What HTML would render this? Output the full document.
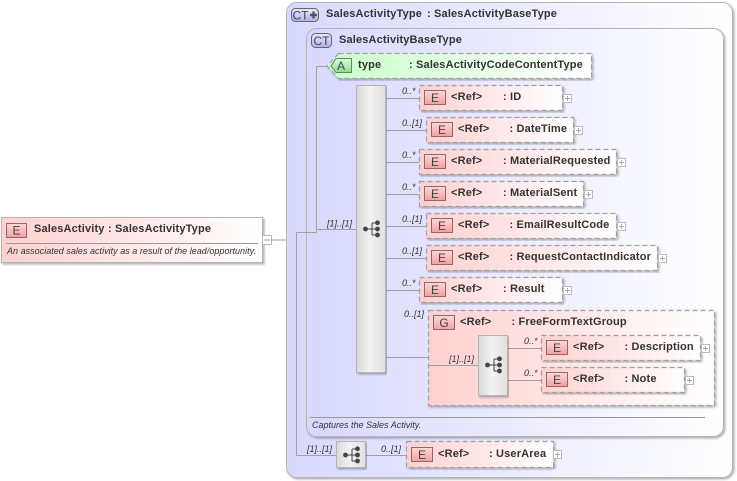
<!DOCTYPE html>
<html><head><meta charset="utf-8"><style>
html,body{margin:0;padding:0;background:#fff;width:737px;height:481px;overflow:hidden}
svg{display:block}
text{font-family:"Liberation Sans",sans-serif}
.n{font-size:11px;font-weight:bold;fill:#333;letter-spacing:.16px}
.c{font-size:9px;font-style:italic;fill:#333}
.d{font-size:9px;font-style:italic;fill:#333}
.i{font-size:12px;fill:#444;text-anchor:middle}
.l{stroke:#a0a0a0;fill:none}
.e{fill:url(#pk);stroke:#a0a0a0;stroke-width:1.2;stroke-dasharray:5 3;filter:url(#s)}
.ic{fill:url(#ic);stroke:#8a6a6a}
.x{fill:#fff;stroke:#bbb}
.m{stroke:#aaa;fill:none}
.sq{fill:url(#sq);stroke:#b4b4b4;filter:url(#s)}
</style></head><body>
<svg width="737" height="481" viewBox="0 0 737 481" xmlns="http://www.w3.org/2000/svg">
<defs>
<linearGradient id="pk"><stop offset="0" stop-color="#ffd0d0"/><stop offset="1" stop-color="#fff"/></linearGradient>
<linearGradient id="bl"><stop offset="0" stop-color="#d8d8ff"/><stop offset="1" stop-color="#fff"/></linearGradient>
<linearGradient id="gr"><stop offset="0" stop-color="#c8ffc8"/><stop offset="1" stop-color="#fff"/></linearGradient>
<linearGradient id="sq"><stop offset="0" stop-color="#d8d8d8"/><stop offset=".45" stop-color="#f2f2f2"/><stop offset="1" stop-color="#e0e0e0"/></linearGradient>
<linearGradient id="ic" x2="0" y2="1"><stop offset="0" stop-color="#ffd8d8"/><stop offset="1" stop-color="#f4a0a0"/></linearGradient>
<linearGradient id="ia" x2="0" y2="1"><stop offset="0" stop-color="#d8ffd8"/><stop offset="1" stop-color="#90dc90"/></linearGradient>
<linearGradient id="ib" x2="0" y2="1"><stop offset="0" stop-color="#e8e8ff"/><stop offset="1" stop-color="#b0b0f0"/></linearGradient>
<filter id="s" x="-5%" y="-5%" width="110%" height="115%"><feDropShadow dx="1.5" dy="1.5" stdDeviation="1" flood-color="#000" flood-opacity=".3"/></filter>
</defs>

<!-- root element -->
<rect x="1.5" y="217.5" width="261" height="45" fill="url(#pk)" stroke="#b4b4b4" filter="url(#s)"/>
<rect class="ic" x="6.5" y="223.5" width="20" height="14"/><text class="i" x="16.5" y="234.500">E</text>
<text class="n" x="34" y="232">SalesActivity</text><text class="n" x="108" y="232">: SalesActivityType</text>
<path d="M6 243.5H258" stroke="#999"/>
<text class="d" x="7" y="254" textLength="249">An associated sales activity as a result of the lead/opportunity.</text>
<rect class="x" x="262.5" y="235.5" width="9" height="9"/><path class="m" d="M264 240H270"/>
<path class="l" d="M271 240H297"/>

<!-- outer CT -->
<rect x="286.5" y="2.5" width="446" height="475" rx="10" fill="url(#bl)" stroke="#b4b4b4" filter="url(#s)"/>
<rect x="291.5" y="8.5" width="27" height="13" rx="4" fill="url(#ib)" stroke="#666"/>
<text class="i" x="300.500" y="19.500">CT</text><path d="M310 15H317M313.500 11.500V18.500" stroke="#555" stroke-width="2.400"/>
<text class="n" x="326" y="17">SalesActivityType</text><text class="n" x="427" y="17">: SalesActivityBaseType</text>

<!-- inner CT -->
<rect x="306.5" y="28.5" width="417" height="408" rx="10" fill="url(#bl)" stroke="#b4b4b4" filter="url(#s)"/>
<rect x="311.5" y="33.5" width="20" height="14" rx="4" fill="url(#ib)" stroke="#666"/>
<text class="i" x="321.5" y="45">CT</text>
<text class="n" x="339" y="43">SalesActivityBaseType</text>
<path d="M310 417.5H705" stroke="#999"/>
<text class="d" x="312" y="428">Captures the Sales Activity.</text>

<!-- connectors -->
<path class="l" d="M296.500 232V455.500H336M296 232.500H316.500M316.500 232.500V66.500H330M316.500 229.500H356"/>
<path class="l" d="M366 455.500H406"/>
<path class="l" d="M385 98.500H419M385 130.500H426M385 162.500H419M385 194.500H419M385 226.500H426M385 258.500H426M385 290.500H419M385 357.500H428"/>
<text class="c" x="327" y="226.500">[1]..[1]</text>
<text class="c" x="307" y="452">[1]..[1]</text>
<text class="c" x="381" y="452">0..[1]</text>

<!-- attribute -->
<path d="M338.500 53.500H591.500V78.500H338.500L327 66Z" fill="url(#gr)" stroke="#a0a0a0" stroke-width="1.200" stroke-dasharray="5 3" filter="url(#s)"/>
<path d="M336 58.500H351.500V72.500H336L331 66Z" fill="url(#ia)" stroke="#5a8a5a"/>
<text class="i" x="341" y="70">A</text>
<text class="n" x="358" y="68">type</text><text class="n" x="409" y="68">: SalesActivityCodeContentType</text>

<!-- main sequence -->
<rect class="sq" x="356.500" y="85.500" width="29" height="287"/>
<g stroke="#444" fill="#444"><path fill="none" d="M366 229H372M372 223V235M372 223H378M372 229H378M372 235H378"/><circle cx="365.500" cy="229" r="2.400" stroke="none"/><circle cx="377.500" cy="222.800" r="2.400" stroke="none"/><circle cx="377.500" cy="229" r="2.400" stroke="none"/><circle cx="377.500" cy="235" r="2.400" stroke="none"/></g>

<!-- ID -->
<text class="c" x="402" y="94">0..*</text>
<rect class="e" x="419.500" y="85.500" width="143" height="25"/>
<rect class="ic" x="424.500" y="90.500" width="21" height="14"/><text class="i" x="435" y="102">E</text>
<text class="n" x="451" y="100">&lt;Ref&gt;</text><text class="n" x="503" y="100">: ID</text>
<rect class="x" x="563.500" y="94.500" width="8" height="8"/><path class="m" d="M565 98.500H570M567.500 96V101"/>

<!-- DateTime -->
<text class="c" x="402" y="126">0..[1]</text>
<rect class="e" x="426.500" y="117.500" width="147" height="25"/>
<rect class="ic" x="431.500" y="122.500" width="21" height="14"/><text class="i" x="442" y="134">E</text>
<text class="n" x="458" y="132">&lt;Ref&gt;</text><text class="n" x="509.500" y="132">: DateTime</text>
<rect class="x" x="574.500" y="126.500" width="8" height="8"/><path class="m" d="M576 130.500H581M578.500 128V133"/>

<!-- MaterialRequested -->
<text class="c" x="402" y="158">0..*</text>
<rect class="e" x="419.500" y="149.500" width="197" height="25"/>
<rect class="ic" x="424.500" y="154.500" width="21" height="14"/><text class="i" x="435" y="166">E</text>
<text class="n" x="451" y="164">&lt;Ref&gt;</text><text class="n" x="503" y="164">: MaterialRequested</text>
<rect class="x" x="617.500" y="158.500" width="8" height="8"/><path class="m" d="M619 162.500H624M621.500 160V165"/>

<!-- MaterialSent -->
<text class="c" x="402" y="190">0..*</text>
<rect class="e" x="419.500" y="181.500" width="164" height="25"/>
<rect class="ic" x="424.500" y="186.500" width="21" height="14"/><text class="i" x="435" y="198">E</text>
<text class="n" x="451" y="196">&lt;Ref&gt;</text><text class="n" x="503" y="196">: MaterialSent</text>
<rect class="x" x="584.500" y="190.500" width="8" height="8"/><path class="m" d="M586 194.500H591M588.500 192V197"/>

<!-- EmailResultCode -->
<text class="c" x="402" y="222">0..[1]</text>
<rect class="e" x="426.500" y="213.500" width="190" height="25"/>
<rect class="ic" x="431.500" y="218.500" width="21" height="14"/><text class="i" x="442" y="230">E</text>
<text class="n" x="458" y="228">&lt;Ref&gt;</text><text class="n" x="509.500" y="228">: EmailResultCode</text>
<rect class="x" x="617.500" y="222.500" width="8" height="8"/><path class="m" d="M619 226.500H624M621.500 224V229"/>

<!-- RequestContactIndicator -->
<text class="c" x="402" y="254">0..[1]</text>
<rect class="e" x="426.500" y="245.500" width="231" height="25"/>
<rect class="ic" x="431.500" y="250.500" width="21" height="14"/><text class="i" x="442" y="262">E</text>
<text class="n" x="458" y="260">&lt;Ref&gt;</text><text class="n" x="509.500" y="260">: RequestContactIndicator</text>
<rect class="x" x="658.500" y="254.500" width="8" height="8"/><path class="m" d="M660 258.500H665M662.500 256V261"/>

<!-- Result -->
<text class="c" x="402" y="286">0..*</text>
<rect class="e" x="419.500" y="277.500" width="143" height="25"/>
<rect class="ic" x="424.500" y="282.500" width="21" height="14"/><text class="i" x="435" y="294">E</text>
<text class="n" x="451" y="292">&lt;Ref&gt;</text><text class="n" x="503" y="292">: Result</text>
<rect class="x" x="563.500" y="286.500" width="8" height="8"/><path class="m" d="M565 290.500H570M567.500 288V293"/>

<!-- Group -->
<text class="c" x="404" y="317">0..[1]</text>
<rect class="e" x="428.500" y="310.500" width="286" height="95"/>
<rect class="ic" x="433.500" y="315.500" width="21" height="14"/><text class="i" x="444" y="327">G</text>
<text class="n" x="460" y="325">&lt;Ref&gt;</text><text class="n" x="511.500" y="325">: FreeFormTextGroup</text>
<path class="l" d="M428 365.500H478M508 348.500H541M508 380.500H541"/>
<text class="c" x="449" y="362">[1]..[1]</text>
<rect class="sq" x="478.500" y="335.500" width="29" height="60"/>
<g stroke="#444" fill="#444"><path fill="none" d="M488 365H494M494 359V371M494 359H500M494 365H500M494 371H500"/><circle cx="487.500" cy="365" r="2.400" stroke="none"/><circle cx="499.500" cy="358.800" r="2.400" stroke="none"/><circle cx="499.500" cy="365" r="2.400" stroke="none"/><circle cx="499.500" cy="371" r="2.400" stroke="none"/></g>

<text class="c" x="524" y="344">0..*</text>
<rect class="e" x="541.500" y="335.500" width="159" height="25"/>
<rect class="ic" x="546.500" y="340.500" width="21" height="14"/><text class="i" x="557" y="352">E</text>
<text class="n" x="573" y="350">&lt;Ref&gt;</text><text class="n" x="624.500" y="350">: Description</text>
<rect class="x" x="701.500" y="344.500" width="8" height="8"/><path class="m" d="M703 348.500H708M705.500 346V351"/>

<text class="c" x="524" y="376">0..*</text>
<rect class="e" x="541.500" y="367.500" width="143" height="25"/>
<rect class="ic" x="546.500" y="372.500" width="21" height="14"/><text class="i" x="557" y="384">E</text>
<text class="n" x="573" y="382">&lt;Ref&gt;</text><text class="n" x="624.500" y="382">: Note</text>
<rect class="x" x="685.500" y="376.500" width="8" height="8"/><path class="m" d="M687 380.500H692M689.500 378V383"/>

<!-- bottom sequence -->
<rect class="sq" x="336.500" y="441.500" width="29" height="26"/>
<g stroke="#444" fill="#444"><path fill="none" d="M346 455H352M352 449V461M352 449H358M352 455H358M352 461H358"/><circle cx="345.500" cy="455" r="2.400" stroke="none"/><circle cx="357.500" cy="448.800" r="2.400" stroke="none"/><circle cx="357.500" cy="455" r="2.400" stroke="none"/><circle cx="357.500" cy="461" r="2.400" stroke="none"/></g>

<!-- UserArea -->
<rect class="e" x="406.500" y="441.500" width="147" height="26"/>
<rect class="ic" x="411.500" y="447.500" width="21" height="14"/><text class="i" x="422" y="459">E</text>
<text class="n" x="438" y="457">&lt;Ref&gt;</text><text class="n" x="489" y="457">: UserArea</text>
<rect class="x" x="553.500" y="450.500" width="8" height="8"/><path class="m" d="M555 454.500H560M557.500 452V457"/>
</svg>
</body></html>
